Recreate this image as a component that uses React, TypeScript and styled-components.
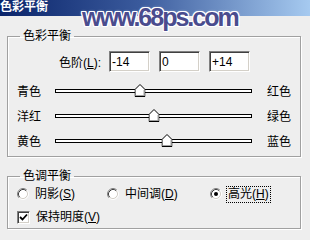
import React from "react";
import styled, { createGlobalStyle } from "styled-components";

const GlobalStyle = createGlobalStyle`
  html, body {
    margin: 0;
    padding: 0;
    background: #eeeeee;
  }
  body {
    font-family: "Liberation Sans", "Noto Sans CJK SC", sans-serif;
    font-size: 12px;
    color: #000000;
  }
`;

const Window = styled.div`
  position: relative;
  width: 310px;
  height: 240px;
  overflow: hidden;
  background: #eeeeee;
`;

const TitleBar = styled.div`
  height: 16px;
  line-height: 15px;
  background: linear-gradient(90deg, #0a246a 0%, #3a5a9c 45%, #a6caf0 100%);
  color: #ffffff;
  font-weight: bold;
  font-size: 12px;
`;

const Watermark = styled.div`
  position: absolute;
  left: 82px;
  top: 5px;
  font-family: "Liberation Sans", sans-serif;
  font-weight: bold;
  font-size: 25px;
  line-height: 25px;
  letter-spacing: -2px;
  color: #4a4c8e;
  text-shadow: 1px 0 0 #fff, -1px 0 0 #fff, 0 1px 0 #fff, 0 -1px 0 #fff,
    1px 1px 0 #fff, -1px -1px 0 #fff, 1px -1px 0 #fff, -1px 1px 0 #fff,
    0 0 3px #e8e8ff;
`;

const Body = styled.div`
  padding: 13px 0 0 7px;
`;

const Group = styled.fieldset<{ $top?: number }>`
  box-sizing: border-box;
  width: 294px;
  margin: ${(p) => p.$top ?? 0}px 0 0 0;
  padding: 0 0 3px 0;
  border: 1px solid #a0a0a0;
  box-shadow: 1px 1px 0 #ffffff, inset 1px 1px 0 #ffffff;
`;

const Legend = styled.legend`
  margin-left: 12px;
  padding: 0 3px;
  line-height: 14px;
  font-size: 12px;
`;

const Key = styled.span`
  text-decoration: underline;
`;

const LevelRow = styled.div`
  display: flex;
  align-items: center;
  margin-top: 8px;
  padding-left: 49px;
`;

const LevelLabel = styled.span`
  width: 44px;
  margin-right: 8px;
  text-align: right;
  white-space: nowrap;
`;

const LevelInput = styled.input`
  box-sizing: border-box;
  width: 41px;
  height: 21px;
  margin: 0 9px 0 0;
  padding: 0 2px;
  border: 1px solid;
  border-color: #808080 #ffffff #ffffff #808080;
  box-shadow: inset 1px 1px 0 #404040, inset -1px -1px 0 #d4d0c8;
  background: #ffffff;
  font-family: "Liberation Sans", sans-serif;
  font-size: 12px;
  color: #000000;
  outline: none;
`;

const Sliders = styled.div`
  margin-top: 6px;
`;

const SliderRow = styled.div`
  display: flex;
  align-items: center;
  height: 25px;
  padding-left: 9px;
`;

const SideLabel = styled.span<{ $right?: boolean }>`
  width: ${(p) => (p.$right ? "auto" : "38px")};
  margin-left: ${(p) => (p.$right ? "15px" : "0")};
  white-space: nowrap;
`;

const Track = styled.div`
  position: relative;
  box-sizing: border-box;
  width: 197px;
  height: 4px;
  border: 1px solid #000000;
  background: #ffffff;
`;

const ThumbWrap = styled.div`
  position: absolute;
  top: -6px;
  width: 11px;
  height: 13px;
  transform: translateX(-50%);
  line-height: 0;
`;

const ToneRow = styled.div<{ $gap: number }>`
  display: flex;
  align-items: center;
  height: 16px;
  margin-top: ${(p) => p.$gap}px;
  padding-left: 9px;
`;

const Option = styled.label<{ $w?: number }>`
  display: flex;
  align-items: center;
  gap: 4px;
  width: ${(p) => (p.$w ? `${p.$w}px` : "auto")};
  white-space: nowrap;
`;

const OptionText = styled.span<{ $focus?: boolean }>`
  line-height: 15px;
  padding: 0 1px;
  border: 1px dotted ${(p) => (p.$focus ? "#000000" : "transparent")};
`;

const CheckBox = styled.span`
  box-sizing: border-box;
  width: 13px;
  height: 13px;
  display: flex;
  align-items: center;
  justify-content: center;
  border: 1px solid;
  border-color: #808080 #ffffff #ffffff #808080;
  box-shadow: inset 1px 1px 0 #404040, inset -1px -1px 0 #d4d0c8;
  background: #ffffff;
`;

const Thumb: React.FC<{ value: number }> = ({ value }) => (
  <ThumbWrap style={{ left: `${((value + 100) / 200) * 100}%` }}>
    <svg width="11" height="13" viewBox="0 0 11 13">
      <path d="M5.5 0.5 L10.5 5.5 L10.5 12.5 L0.5 12.5 L0.5 5.5 Z" fill="#fff" stroke="#000" />
      <path d="M9.5 6 V11.5 H1.5" fill="none" stroke="#a0a0a0" />
    </svg>
  </ThumbWrap>
);

const Radio: React.FC<{ checked?: boolean }> = ({ checked }) => (
  <svg width="12" height="12" viewBox="0 0 12 12">
    <circle cx="6" cy="6" r="4.5" fill="#fff" />
    <path d="M2.11 9.89 A5.5 5.5 0 0 1 9.89 2.11" fill="none" stroke="#808080" />
    <path d="M2.82 9.18 A4.5 4.5 0 0 1 9.18 2.82" fill="none" stroke="#404040" />
    <path d="M9.89 2.11 A5.5 5.5 0 0 1 2.11 9.89" fill="none" stroke="#fff" />
    <path d="M9.18 2.82 A4.5 4.5 0 0 1 2.82 9.18" fill="none" stroke="#d4d0c8" />
    {checked && <circle cx="6" cy="6" r="2" fill="#000" />}
  </svg>
);

const sliders = [
  { left: "青色", right: "红色", value: -14 },
  { left: "洋红", right: "绿色", value: 0 },
  { left: "黄色", right: "蓝色", value: 14 },
];

export default function App() {
  return (
    <Window>
      <GlobalStyle />
      <TitleBar>色彩平衡</TitleBar>
      <Watermark>www.68ps.com</Watermark>
      <Body>
        <Group>
          <Legend>色彩平衡</Legend>
          <LevelRow>
            <LevelLabel>
              色阶(<Key>L</Key>):
            </LevelLabel>
            <LevelInput defaultValue="-14" />
            <LevelInput defaultValue="0" />
            <LevelInput defaultValue="+14" />
          </LevelRow>
          <Sliders>
            {sliders.map((s) => (
              <SliderRow key={s.left}>
                <SideLabel>{s.left}</SideLabel>
                <Track>
                  <Thumb value={s.value} />
                </Track>
                <SideLabel $right>{s.right}</SideLabel>
              </SliderRow>
            ))}
          </Sliders>
        </Group>
        <Group $top={12}>
          <Legend>色调平衡</Legend>
          <ToneRow $gap={3}>
            <Option $w={90}>
              <Radio />
              <OptionText>
                阴影(<Key>S</Key>)
              </OptionText>
            </Option>
            <Option $w={103}>
              <Radio />
              <OptionText>
                中间调(<Key>D</Key>)
              </OptionText>
            </Option>
            <Option>
              <Radio checked />
              <OptionText $focus>
                高光(<Key>H</Key>)
              </OptionText>
            </Option>
          </ToneRow>
          <ToneRow $gap={7}>
            <Option>
              <CheckBox>
                <svg width="9" height="9" viewBox="0 0 9 9">
                  <path d="M1 4 L3.5 6.5 L8 1.5" fill="none" stroke="#000" strokeWidth="1.8" />
                </svg>
              </CheckBox>
              <OptionText>
                保持明度(<Key>V</Key>)
              </OptionText>
            </Option>
          </ToneRow>
        </Group>
      </Body>
    </Window>
  );
}
